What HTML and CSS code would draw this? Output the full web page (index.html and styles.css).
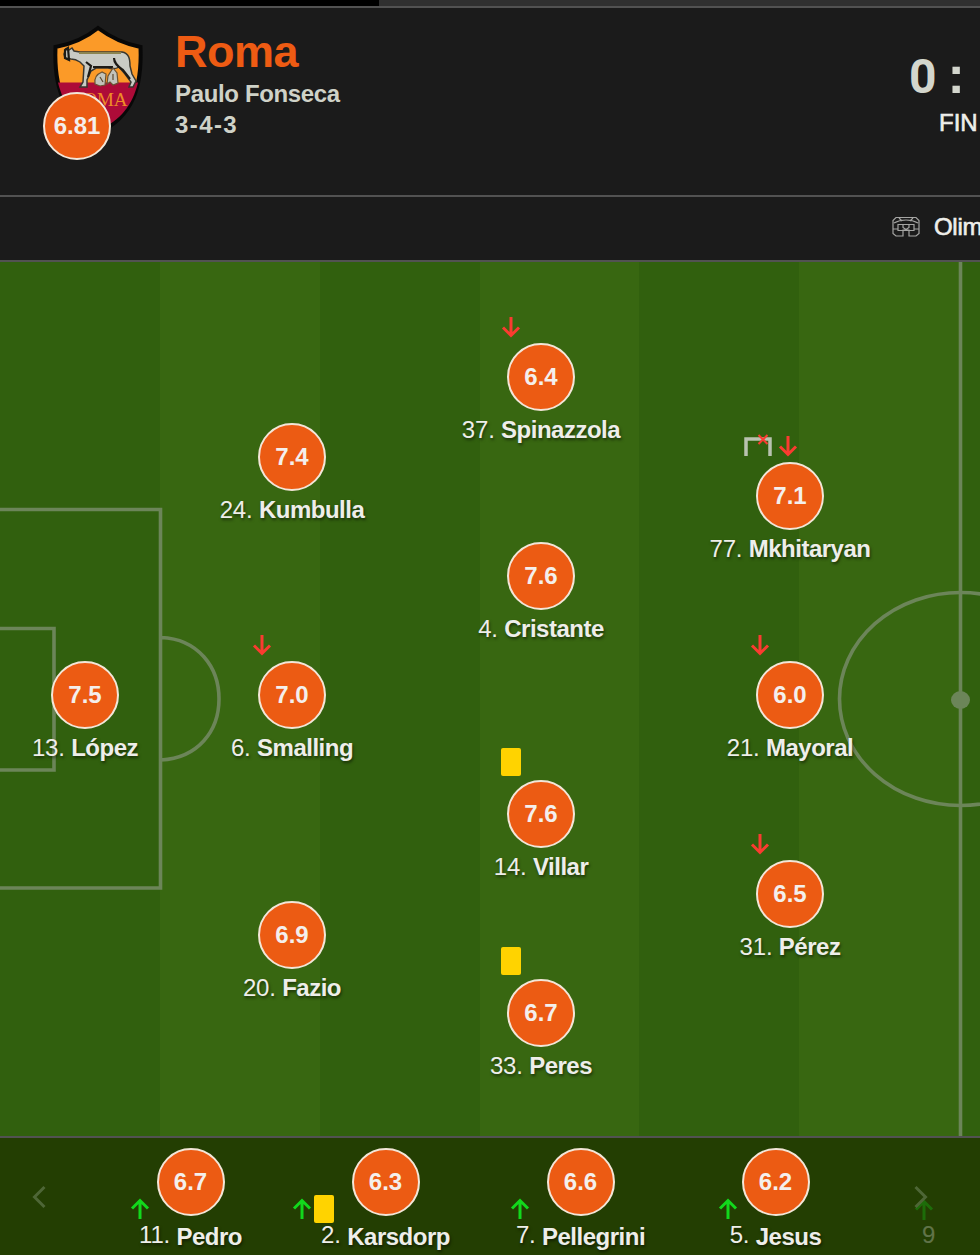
FILE: index.html
```html
<!DOCTYPE html>
<html lang="es">
  <head>
    <meta charset="utf-8" />
    <title>Roma - Alineaciones</title>
    <link rel="stylesheet" href="styles.css">
  </head>
  <body>
    <svg class="defs" width="0" height="0">
      <symbol id="down" viewBox="0 0 20 24"><path d="M10 2v18M2 12.500l8 8 8-8" /></symbol>
      <symbol id="up" viewBox="0 0 20 24"><path d="M10 22V4M2 11.500l8-8 8 8" /></symbol>
    </svg>
    <div class="progress"><div class="progress-bar"></div></div>
    <header class="match">
      <div class="crest">
        <svg width="96" height="112" viewBox="0 0 96 112">
          <path d="M46 4C58 13 73 20 88.500 23C90 61 82 92 46 109C10 92 2 61 3.500 23C20 20 35 13 46 4Z" fill="#fb9a28" stroke="#080808" stroke-width="4" />
          <path d="M6 58.500H86C80.500 81 69 96 46 106.500C23 96 11.500 81 6 58.500Z" fill="#ad0b38" />
          <path d="M14 25l3 1 3-2 2 3 6 1h42c7 1 8 7 8 14l2 8 4 7-3 6h-4l2-5-6-8-6-7c-3 2-7 2-11 1H44l-5 3-4 9v7h-7l3-5 1-16-4-4c-3-2-6-3-9-3l-6-1-1-4z" fill="#c9cbc4" stroke="#39372f" stroke-width="1.500" />
          <path d="M13 26l3-2 1 12-4-2zM34 38l5 4-3 11M41 43h20M62 34c0 6 5 9 9 12l7 9" fill="none" stroke="#1d1b16" stroke-width="2.200" />
          <path d="M27 29h42" stroke="#8b8450" stroke-width="2" />
          <path d="M43 60c-1-6 2-10 7-12l4 2-1 11-5 1zM55 60l1-8 5-8 4 5 1 10-5 2-3-3z" fill="#c2c3ba" stroke="#6a5232" stroke-width="1.200" />
          <path d="M48 53l3 5M61 50v6" stroke="#5c4a30" stroke-width="1.200" />
          <text x="47" y="82" class="crest-name">ROMA</text>
        </svg>
        <span class="rating crest-rating">6.81</span>
      </div>
      <div class="team">
        <h1>Roma</h1>
        <p>Paulo Fonseca</p>
        <p class="formation">3-4-3</p>
      </div>
      <div class="result">
        <div class="score">0 <span>:</span></div>
        <div class="status">FIN</div>
      </div>
    </header>
    <div class="venue">
      <svg width="28" height="22" viewBox="0 0 28 22" fill="none" stroke="#a5a5a3" stroke-width="1.200">
        <path d="M4 1.500h20l3 3v13l-3 2.500h-7v-6h-6v6H4l-3-2.500v-13zM2 7c7-4 17-4 24 0M7 2l3 3M21 2l-3 3M6 8.500h16v6H6zM1 13h5M22 13h5M11 8.500v3l3 2 3-2v-3" />
      </svg>
      <span>Olim</span>
    </div>

    <main class="pitch">
      <svg class="lines" width="980" height="874" viewBox="0 0 980 874">
        <path d="M-4 247.500H160.500V626H-4M-4 366.500H54V508H-4M161 375.500C198 377 219 405 219 437S198 496 161 498M960.500 0V874" />
        <ellipse cx="960.500" cy="437" rx="121" ry="106.500" />
        <ellipse class="spot" cx="960.500" cy="438" rx="9.500" ry="9" />
      </svg>

      <div class="player lopez"><span class="rating">7.5</span><p>13. <b>López</b></p></div>

      <div class="player kumbulla"><span class="rating">7.4</span><p>24. <b>Kumbulla</b></p></div>
      <div class="player smalling">
        <div class="events"><svg class="out"><use href="#down" /></svg></div>
        <span class="rating">7.0</span><p>6. <b>Smalling</b></p>
      </div>
      <div class="player fazio"><span class="rating">6.9</span><p>20. <b>Fazio</b></p></div>

      <div class="player spinazzola">
        <div class="events"><svg class="out"><use href="#down" /></svg></div>
        <span class="rating">6.4</span><p>37. <b>Spinazzola</b></p>
      </div>
      <div class="player cristante"><span class="rating">7.6</span><p>4. <b>Cristante</b></p></div>
      <div class="player villar">
        <div class="events"><i class="yellow"></i></div>
        <span class="rating">7.6</span><p>14. <b>Villar</b></p>
      </div>
      <div class="player peres">
        <div class="events"><i class="yellow"></i></div>
        <span class="rating">6.7</span><p>33. <b>Peres</b></p>
      </div>

      <div class="player mkhitaryan">
        <div class="events">
          <svg class="miss" viewBox="0 0 28 24">
            <path d="M2 22V5h24v17" fill="none" stroke="#b9c2b0" stroke-width="3.500" />
            <path d="M14.500 1l9 9M23.500 1l-9 9" stroke="#fb3b30" stroke-width="2" />
          </svg>
          <svg class="out"><use href="#down" /></svg>
        </div>
        <span class="rating">7.1</span><p>77. <b>Mkhitaryan</b></p>
      </div>
      <div class="player mayoral">
        <div class="events"><svg class="out"><use href="#down" /></svg></div>
        <span class="rating">6.0</span><p>21. <b>Mayoral</b></p>
      </div>
      <div class="player perez">
        <div class="events"><svg class="out"><use href="#down" /></svg></div>
        <span class="rating">6.5</span><p>31. <b>Pérez</b></p>
      </div>
    </main>

    <footer class="bench">
      <svg class="arrow prev" viewBox="0 0 14 24"><path d="M12.500 2L2.500 12l10 10" /></svg>
      <div class="subs">
        <div class="sub">
          <div class="events in-pedro"><svg class="in"><use href="#up" /></svg></div>
          <span class="rating">6.7</span><p><span>11.</span> <b>Pedro</b></p>
        </div>
        <div class="sub">
          <div class="events in-karsdorp"><svg class="in"><use href="#up" /></svg><i class="yellow"></i></div>
          <span class="rating">6.3</span><p><span>2.</span> <b>Karsdorp</b></p>
        </div>
        <div class="sub">
          <div class="events in-pellegrini"><svg class="in"><use href="#up" /></svg></div>
          <span class="rating">6.6</span><p><span>7.</span> <b>Pellegrini</b></p>
        </div>
        <div class="sub">
          <div class="events in-jesus"><svg class="in"><use href="#up" /></svg></div>
          <span class="rating">6.2</span><p><span>5.</span> <b>Jesus</b></p>
        </div>
      </div>
      <div class="sub-hidden">
        <svg class="in"><use href="#up" /></svg>
        <span>9</span>
      </div>
      <svg class="arrow next" viewBox="0 0 14 24"><path d="M1.500 2l10 10-10 10" /></svg>
    </footer>
  </body>
</html>
```
FILE: styles.css
```css
* {
  box-sizing: border-box;
}
body {
  margin: 0;
  width: 980px;
  height: 1255px;
  overflow: hidden;
  background-color: #1b1b1b;
  font-family: "Liberation Sans", Arial, sans-serif;
  font-size: 24px;
  color: #eeeeea;
}
h1,
p {
  margin: 0;
}
svg {
  display: block;
  flex-shrink: 0;
}
.defs {
  position: absolute;
}

/* header */
.progress {
  height: 8px;
  background-color: #303030;
  border-bottom: 2px solid #525252;
}
.progress-bar {
  width: 379px;
  height: 6px;
  background-color: #000;
}
.match {
  height: 189px;
  display: flex;
  border-bottom: 2px solid #525252;
}
.crest {
  position: relative;
  width: 175px;
  padding: 16px 0 0 52px;
}
.crest-name {
  font-family: "Liberation Serif", serif;
  font-size: 19px;
  fill: #ef8b27;
  text-anchor: middle;
}
.crest-rating {
  position: absolute;
  left: 43px;
  top: 84px;
}
.team {
  flex: 1;
  padding-top: 18px;
  color: #cfd2c8;
  font-weight: bold;
}
.team h1 {
  font-size: 45px;
  line-height: 52px;
  letter-spacing: -0.500px;
  color: #ee5b13;
}
.team p {
  line-height: 31px;
  letter-spacing: -0.350px;
}
.team .formation {
  letter-spacing: 1.400px;
}
.result {
  width: 72px;
  padding-top: 40px;
}
.score {
  padding-left: 1px;
  font-family: Roboto, sans-serif;
  font-weight: bold;
  font-size: 48px;
  line-height: 58px;
  color: #d3d6cd;
  white-space: nowrap;
}
.score span {
  margin-left: -1px;
  font-family: "Liberation Sans", Arial, sans-serif;
  font-size: 52px;
  line-height: 40px;
}
.status {
  padding-left: 31px;
  line-height: 34px;
  -webkit-text-stroke: 0.600px;
}
.venue {
  height: 65px;
  display: flex;
  align-items: center;
  gap: 14px;
  padding: 0 0 3px 892px;
  border-bottom: 2px solid #525252;
  letter-spacing: -0.300px;
  -webkit-text-stroke: 0.600px;
}
.rating {
  width: 68px;
  height: 68px;
  display: flex;
  align-items: center;
  justify-content: center;
  border: 2px solid #f3e6d8;
  border-radius: 50%;
  background-color: #ec5b13;
  color: #f4efec;
  font-weight: bold;
}

/* pitch */
.pitch {
  position: relative;
  height: 874px;
  background: repeating-linear-gradient(90deg, #31600e 0 160px, #386711 160px 319.600px);
}
.lines {
  fill: none;
  stroke: #6c8559;
  stroke-width: 3.600;
}
.lines .spot {
  fill: #6c8559;
  stroke: none;
}
.player {
  position: absolute;
  width: 200px;
  margin-left: -100px;
  display: flex;
  flex-direction: column;
  align-items: center;
}
.player p,
.sub p {
  white-space: nowrap;
  line-height: 28px;
  margin-top: 5px;
  letter-spacing: -0.200px;
  text-shadow: 1px 2px 3px rgba(0, 0, 0, 0.500);
}
.player b,
.sub b {
  letter-spacing: -0.500px;
}
.lopez { left: 85px; top: 399px; }
.kumbulla { left: 292px; top: 161px; }
.smalling { left: 292px; top: 399px; }
.fazio { left: 292px; top: 639px; }
.spinazzola { left: 541px; top: 81px; }
.cristante { left: 541px; top: 280px; }
.villar { left: 541px; top: 518px; }
.peres { left: 541px; top: 717px; }
.mkhitaryan { left: 790px; top: 200px; }
.mayoral { left: 790px; top: 399px; }
.perez { left: 790px; top: 598px; }

/* cards, goals and substitutions */
.events {
  position: absolute;
  right: 120px;
  top: -28px;
  display: flex;
  gap: 6px;
}
.mkhitaryan .events {
  right: 92px;
}
.out,
.in {
  width: 20px;
  height: 24px;
  fill: none;
  stroke: #fb3b30;
  stroke-width: 3;
}
.in {
  stroke: #12d81c;
}
.miss {
  width: 28px;
  height: 24px;
}
.yellow {
  width: 20px;
  height: 28px;
  border-radius: 2px;
  background-color: #ffd300;
}
.villar .events,
.peres .events {
  top: -32px;
}

/* bench */
.bench {
  position: relative;
  height: 119px;
  border-top: 2px solid #525252;
  background-color: #233e02;
  overflow: hidden;
}
.subs {
  display: flex;
  padding: 10px 0 0 93px;
}
.sub {
  position: relative;
  width: 195px;
  display: flex;
  flex-direction: column;
  align-items: center;
}
.sub p {
  margin-top: 7px;
}
.sub p span {
  position: relative;
  top: -2px;
}
.sub .events {
  top: 49px;
  right: auto;
  gap: 2px;
  align-items: center;
}
.events.in-pedro { left: 37px; }
.events.in-karsdorp { left: 4px; top: 47px; }
.events.in-pellegrini { left: 27px; }
.events.in-jesus { left: 40px; }
.arrow {
  position: absolute;
  top: 47px;
  width: 14px;
  height: 24px;
  fill: none;
  stroke: #4e6636;
  stroke-width: 3;
}
.prev {
  left: 32px;
}
.next {
  left: 914px;
}
.sub-hidden {
  position: absolute;
  left: 914px;
  top: 60px;
  opacity: 0.300;
}
.sub-hidden span {
  display: block;
  padding-left: 8px;
  line-height: 26px;
}
```
